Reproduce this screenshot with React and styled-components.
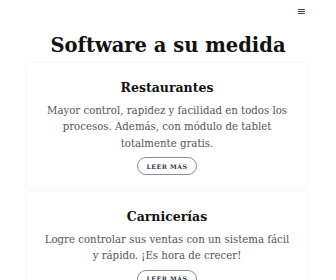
import React from 'react'
import styled, { createGlobalStyle } from 'styled-components'

const GlobalStyle = createGlobalStyle`
  html, body {
    margin: 0;
    padding: 0;
    background: #fff;
  }
  body {
    font-family: 'DejaVu Serif', serif;
    overflow: hidden;
  }
`

const Page = styled.div`
  width: 336px;
  height: 280px;
  overflow: hidden;
`

const TopBar = styled.div`
  display: flex;
  justify-content: flex-end;
  height: 24px;
  padding-right: 30px;
`

const Burger = styled.button`
  border: none;
  background: none;
  padding: 0;
  margin-top: 0;
  font-family: 'DejaVu Sans', sans-serif;
  font-size: 11px;
  line-height: 14px;
  color: #3a3f55;
  cursor: pointer;
`

const Title = styled.h1`
  margin: 8px 0 0;
  text-align: center;
  font-size: 19.5px;
  line-height: 28px;
  font-weight: 700;
  color: #111;
`

const Cards = styled.div`
  display: flex;
  flex-direction: column;
  gap: 4px;
  padding: 3px 29px 0 27px;
`

const Card = styled.section`
  display: flex;
  flex-direction: column;
  align-items: center;
  padding: 16px 14px 13px;
  background: #fff;
  box-shadow: 0 0 3px rgba(0, 0, 0, 0.06);
`

const CardTitle = styled.h2`
  margin: 0;
  font-size: 12.5px;
  line-height: 18px;
  font-weight: 700;
  color: #111;
`

const CardText = styled.p`
  margin: 5.5px 0 0;
  text-align: center;
  font-size: 10.2px;
  line-height: 16.5px;
  color: #555;
`

const ReadMore = styled.a`
  margin-top: 5px;
  display: inline-flex;
  align-items: center;
  justify-content: center;
  width: 60px;
  height: 18px;
  box-sizing: border-box;
  border: 1px solid #8a8d99;
  border-radius: 10px;
  font-size: 6.2px;
  font-weight: 700;
  letter-spacing: 0.5px;
  color: #2d3250;
  text-decoration: none;
`

const services = [
  {
    title: 'Restaurantes',
    text: 'Mayor control, rapidez y facilidad en todos los procesos. Además, con módulo de tablet totalmente gratis.',
  },
  {
    title: 'Carnicerías',
    text: 'Logre controlar sus ventas con un sistema fácil y rápido. ¡Es hora de crecer!',
  },
]

const App = () => {
  return (
    <Page>
      <GlobalStyle />
      <TopBar>
        <Burger aria-label="menu">≡</Burger>
      </TopBar>
      <Title>Software a su medida</Title>
      <Cards>
        {services.map((s) => (
          <Card key={s.title}>
            <CardTitle>{s.title}</CardTitle>
            <CardText>{s.text}</CardText>
            <ReadMore href="#">LEER MÁS</ReadMore>
          </Card>
        ))}
      </Cards>
    </Page>
  )
}

export default App
